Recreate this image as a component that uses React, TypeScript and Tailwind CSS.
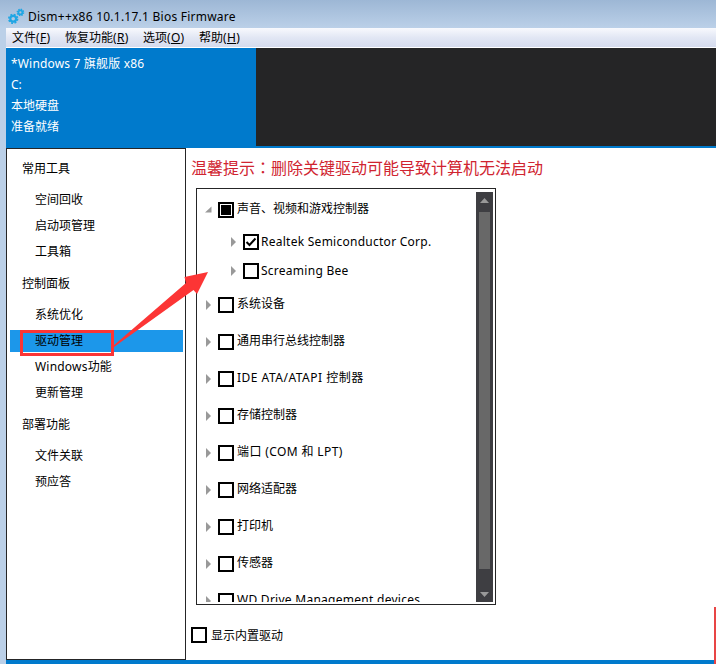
import { useState } from 'react'

interface Driver {
  name: string
  spacing?: string
}

const menus = [
  { label: '文件', hotkey: 'F', width: 'w-[53px]' },
  { label: '恢复功能', hotkey: 'R', width: 'w-[78px]' },
  { label: '选项', hotkey: 'O', width: 'w-14' },
  { label: '帮助', hotkey: 'H', width: 'w-14' }
]

const sections = [
  { title: '常用工具', items: ['空间回收', '启动项管理', '工具箱'] },
  { title: '控制面板', items: ['系统优化', '驱动管理', 'Windows功能', '更新管理'] },
  { title: '部署功能', items: ['文件关联', '预应答'] }
]

const drivers: Driver[] = [
  { name: '系统设备' },
  { name: '通用串行总线控制器' },
  { name: 'IDE ATA/ATAPI 控制器', spacing: 'tracking-[0.5px]' },
  { name: '存储控制器' },
  { name: '端口 (COM 和 LPT)', spacing: 'tracking-[0.38px]' },
  { name: '网络适配器' },
  { name: '打印机' },
  { name: '传感器' },
  { name: 'WD Drive Management devices', spacing: 'tracking-[0.27px]' }
]

function Gears() {
  return (
    <svg width="17" height="17" viewBox="0 0 17 17" fill="none" stroke="#1fa6e4">
      <circle cx="5.2" cy="10.8" r="2.9" strokeWidth="2.2" />
      <circle cx="5.2" cy="10.8" r="4.4" strokeWidth="1.6" strokeDasharray="1.9 1.556" />
      <circle cx="12.4" cy="4.4" r="2" strokeWidth="1.8" />
      <circle cx="12.4" cy="4.4" r="3.2" strokeWidth="1.3" strokeDasharray="1.4 1.113" />
    </svg>
  )
}

function Expander({ open }: { open?: boolean }) {
  return (
    <svg width="7" height="10" viewBox="0 0 7 10" className="shrink-0" fill="#999">
      {open ? <path d="M6.5 1.5v6H0z" /> : <path d="M1 0l5 5-5 5z" />}
    </svg>
  )
}

function CheckBox({ state = 'off' }: { state?: 'off' | 'on' | 'mixed' }) {
  return (
    <span className="flex size-4 shrink-0 items-center justify-center border-2 border-black bg-white">
      {state === 'mixed' && <span className="size-2.5 bg-black" />}
      {state === 'on' && (
        <svg width="12" height="12" viewBox="0 0 12 12" fill="none" stroke="#000" strokeWidth="2">
          <path d="M1.5 6l3 3 6-6.5" />
        </svg>
      )}
    </span>
  )
}

export default function App() {
  const [selected, setSelected] = useState('驱动管理')

  return (
    <div className="relative flex h-[664px] w-[716px] flex-col overflow-hidden bg-[#bbd0e8] pl-1.5 font-['Noto_Sans','Noto_Sans_CJK_SC',sans-serif] text-xs text-black">
      <div className="-ml-1.5 flex h-7 shrink-0 items-center gap-[3px] bg-linear-to-b from-[#9db7d5] to-[#bbd0e8] pt-[5px] pl-2">
        <Gears />
        <span className="tracking-[0.24px] whitespace-nowrap">Dism++x86 10.1.17.1 Bios Firmware</span>
      </div>

      <div className="flex h-5 shrink-0 items-center border-b border-white bg-linear-to-b from-[#f8f9fd] via-[#e2e7f4] to-[#d5dbed] pl-1.5">
        {menus.map(menu => (
          <div key={menu.hotkey} className={menu.width}>
            {menu.label}
            <span className="tracking-[0.3px]">(<span className="underline">{menu.hotkey}</span>)</span>
          </div>
        ))}
      </div>

      <div className="flex h-[100px] shrink-0 bg-[#007acc] pb-0.5">
        <div className="w-[250px] pt-[5px] pl-[5px] leading-[21px] text-white">
          <p className="tracking-[0.17px]">*Windows 7 旗舰版 x86</p>
          <p>C:</p>
          <p>本地硬盘</p>
          <p>准备就绪</p>
        </div>
        <div className="flex-1 bg-[#252526]" />
      </div>

      <div className="flex h-[512px] shrink-0 bg-white">
        <nav className="w-[180px] shrink-0 border border-[#252526] px-[3px] pt-[5px]">
          {sections.map(section => (
            <div key={section.title}>
              <p className="mb-1 h-[29px] pl-3 leading-[29px]">{section.title}</p>
              <div className="mb-1">
                {section.items.map(item => (
                  <button
                    key={item}
                    onClick={() => setSelected(item)}
                    className={`block h-[26px] w-[173px] border-y-2 border-transparent bg-clip-padding pl-[25px] text-left leading-[22px] ${item === 'Windows功能' ? 'tracking-[0.2px]' : ''} ${selected === item ? 'bg-[#1c97ea]' : ''}`}
                  >
                    {item}
                  </button>
                ))}
              </div>
            </div>
          ))}
        </nav>

        <main className="flex-1 pl-[5px]">
          <h1 className="h-10 pt-[7px] text-base leading-6 text-[#d02430]">
            温馨提示<span className="font-['Noto_Sans_CJK_TC',sans-serif]" lang="zh-TW">：</span>删除关键驱动可能导致计算机无法启动
          </h1>
          <div className="ml-[5px] flex h-[417px] w-[300px] border border-[#252526] p-0.5 pt-[3px]">
            <div className="flex-1 overflow-hidden pt-px">
              <div className="flex h-[34px] items-center pl-1.5">
                <Expander open />
                <span className="ml-1.5"><CheckBox state="mixed" /></span>
                <span className="mb-0.5 ml-[3px]">声音、视频和游戏控制器</span>
              </div>
              <div className="flex h-[29px] items-center pt-px pl-[31px]">
                <Expander />
                <span className="ml-1.5"><CheckBox state="on" /></span>
                <span className="ml-0.5 tracking-[0.26px]">Realtek Semiconductor Corp.</span>
              </div>
              <div className="flex h-[29px] items-center pt-px pl-[31px]">
                <Expander />
                <span className="ml-1.5"><CheckBox /></span>
                <span className="ml-0.5 tracking-[0.26px]">Screaming Bee</span>
              </div>
              {drivers.map(driver => (
                <div key={driver.name} className="flex h-[37px] items-center pt-[3px] pl-1.5">
                  <Expander />
                  <span className="ml-1.5"><CheckBox /></span>
                  <span className={`mb-0.5 ml-[3px] ${driver.spacing ?? ''}`}>{driver.name}</span>
                </div>
              ))}
            </div>
            <div className="flex w-[17px] flex-col items-center bg-[#3e3e42]">
              <svg width="9" height="20" viewBox="0 0 9 20" fill="#999">
                <path d="M0 11l4.5-5 4.5 5z" />
              </svg>
              <div className="w-[11px] flex-1 bg-[#686868]" />
              <svg width="9" height="33" viewBox="0 0 9 33" fill="#999">
                <path d="M0 23l4.5 5 4.5-5z" />
              </svg>
            </div>
          </div>
          <div className="mt-[22px] flex items-center gap-1">
            <CheckBox />
            <span className="-mb-0.5">显示内置驱动</span>
          </div>
        </main>
      </div>
      <div className="h-1 shrink-0 bg-[#007acc]" />

      <div className="absolute top-[330px] left-5 h-[26px] w-[94px] border-3 border-[#fc3535]" />
      <svg className="absolute top-[270px] left-[112px]" width="98" height="80" viewBox="0 0 98 80" fill="#fc3535">
        <path d="M1 76L74 13 72.5 7 96 2 85 24 81.5 20 2 77z" />
      </svg>
      <div className="absolute top-[607px] left-[714px] h-[57px] w-0.5 bg-[#e84545]" />
    </div>
  )
}
